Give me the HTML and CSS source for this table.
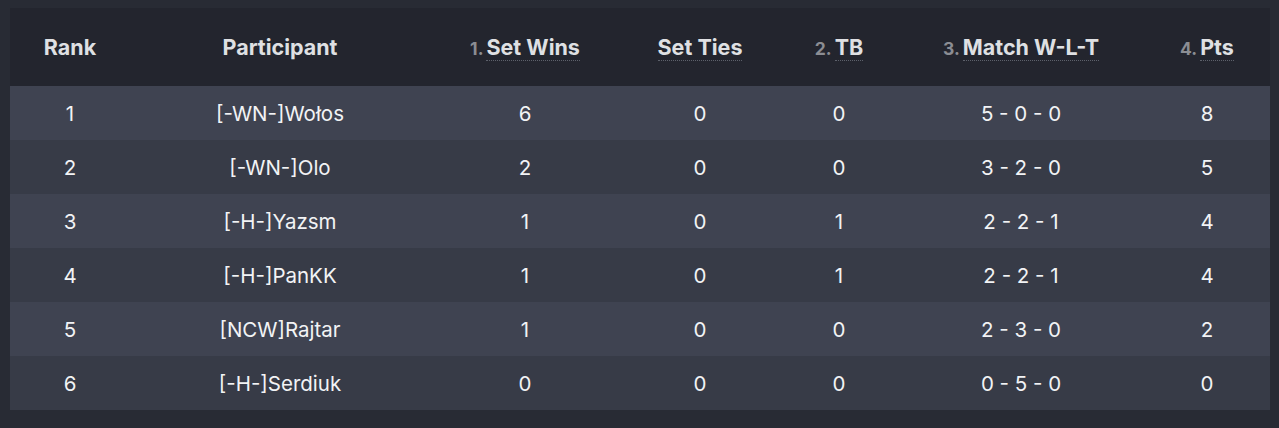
FILE: index.html
```html
<!DOCTYPE html>
<html>
<head>
<meta charset="utf-8">
<link rel="stylesheet" href="styles.css">
</head>
<body>
<div class="wrap">
<table class="standings">
  <colgroup>
    <col class="c-rank"><col class="c-part"><col class="c-sw"><col class="c-st"><col class="c-tb"><col class="c-match"><col class="c-pts">
  </colgroup>
  <thead>
    <tr>
      <th>Rank</th>
      <th>Participant</th>
      <th><span class="ord">1.</span><span class="abbr">Set Wins</span></th>
      <th><span class="abbr">Set Ties</span></th>
      <th><span class="ord">2.</span><span class="abbr">TB</span></th>
      <th><span class="ord">3.</span><span class="abbr">Match W-L-T</span></th>
      <th><span class="ord">4.</span><span class="abbr">Pts</span></th>
    </tr>
  </thead>
  <tbody>
    <tr><td>1</td><td>[-WN-]Wołos</td><td>6</td><td>0</td><td>0</td><td>5 - 0 - 0</td><td>8</td></tr>
    <tr><td>2</td><td>[-WN-]Olo</td><td>2</td><td>0</td><td>0</td><td>3 - 2 - 0</td><td>5</td></tr>
    <tr><td>3</td><td>[-H-]Yazsm</td><td>1</td><td>0</td><td>1</td><td>2 - 2 - 1</td><td>4</td></tr>
    <tr><td>4</td><td>[-H-]PanKK</td><td>1</td><td>0</td><td>1</td><td>2 - 2 - 1</td><td>4</td></tr>
    <tr><td>5</td><td>[NCW]Rajtar</td><td>1</td><td>0</td><td>0</td><td>2 - 3 - 0</td><td>2</td></tr>
    <tr><td>6</td><td>[-H-]Serdiuk</td><td>0</td><td>0</td><td>0</td><td>0 - 5 - 0</td><td>0</td></tr>
  </tbody>
</table>
</div>
</body>
</html>
```

FILE: styles.css
```css
html, body {
  margin: 0;
  padding: 0;
  background: #282b34;
}
.wrap {
  padding: 8px 9px 18px 10px;
}
.standings {
  width: 1260px;
  border-collapse: collapse;
  table-layout: fixed;
  font-family: Inter, "Noto Sans", sans-serif;
  color: #f2f3f5;
}
.c-rank { width: 120px; }
.c-part { width: 300px; }
.c-sw { width: 190px; }
.c-st { width: 160px; }
.c-tb { width: 118px; }
.c-match { width: 246px; }
.c-pts { width: 126px; }

.standings thead tr {
  background: #23252e;
  height: 78px;
}
.standings th {
  font-size: 21.5px;
  font-weight: 700;
  color: #dfe0e3;
  text-align: center;
  vertical-align: middle;
  padding: 0;
  white-space: nowrap;
}
.ord {
  font-size: 17.5px;
  font-weight: 700;
  color: #8b8d93;
  margin-right: 3px;
}
.abbr {
  display: inline-block;
  border-bottom: 1px dotted #5d616b;
  padding-bottom: 0;
  line-height: 25px;
  margin-top: 1px;
}
.standings tbody tr {
  height: 54px;
}
.standings tbody tr:nth-child(odd) {
  background: #3f4351;
}
.standings tbody tr:nth-child(even) {
  background: #373b47;
}
.standings td {
  font-size: 20.5px;
  font-weight: 400;
  text-align: center;
  vertical-align: middle;
  padding: 0;
  white-space: nowrap;
}
```
